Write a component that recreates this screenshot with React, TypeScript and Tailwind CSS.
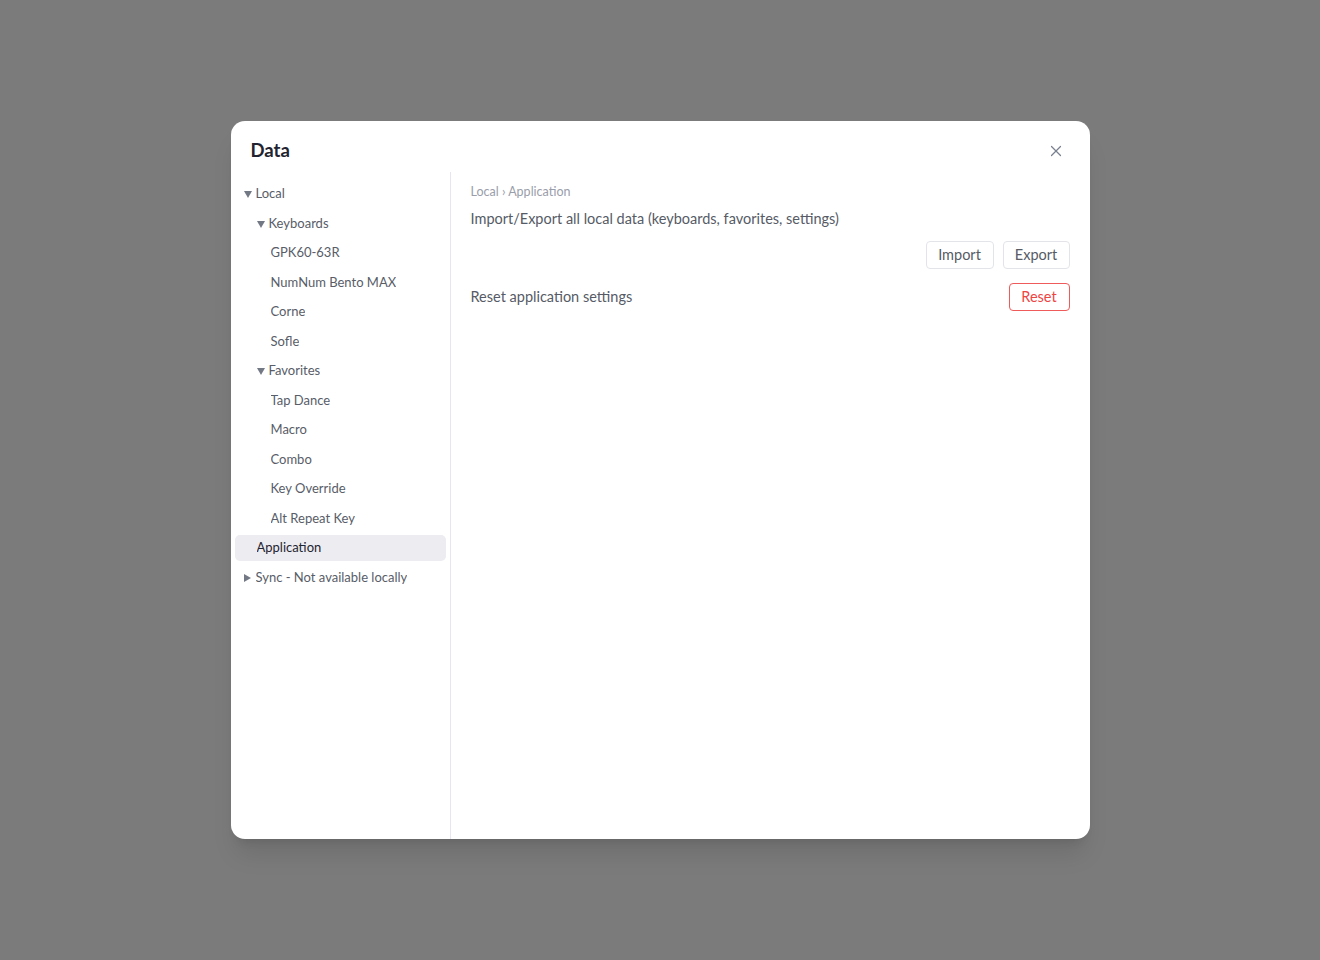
import { X } from "lucide-react";

type Node = {
  label: string;
  level: number;
  branch?: "open" | "closed";
  active?: boolean;
};

const tree: Node[] = [
  { label: "Local", level: 0, branch: "open" },
  { label: "Keyboards", level: 1, branch: "open" },
  { label: "GPK60-63R", level: 2 },
  { label: "NumNum Bento MAX", level: 2 },
  { label: "Corne", level: 2 },
  { label: "Sofle", level: 2 },
  { label: "Favorites", level: 1, branch: "open" },
  { label: "Tap Dance", level: 2 },
  { label: "Macro", level: 2 },
  { label: "Combo", level: 2 },
  { label: "Key Override", level: 2 },
  { label: "Alt Repeat Key", level: 2 },
  { label: "Application", level: 1, active: true },
  { label: "Sync - Not available locally", level: 0, branch: "closed" },
];

const indent = ["pl-[9px]", "pl-[22px]", "pl-[36px]"];

function Caret({ open }: { open: boolean }) {
  return (
    <span className="flex w-3 shrink-0 items-center">
      <svg width="8" height="8" viewBox="0 0 8 8" className="fill-[#737885]">
        {open ? <polygon points="0,1 8,1 4,8" /> : <polygon points="0,0 7,4 0,8" />}
      </svg>
    </span>
  );
}

function TreeRow({ node }: { node: Node }) {
  return (
    <div
      className={`flex h-[26px] items-center rounded-[5px] ${indent[node.level]} ${
        node.active ? "bg-[#ececf1] text-[#1f2430]" : "text-[#585d68]"
      }`}
    >
      {node.branch && <Caret open={node.branch === "open"} />}
      <span className="truncate">{node.label}</span>
    </div>
  );
}

export default function App() {
  return (
    <div
      className="flex min-h-[960px] w-full items-center justify-center bg-[#7b7b7c]"
      style={{ fontFamily: "Lato, 'Noto Sans', sans-serif" }}
    >
      <div className="flex h-[718px] w-[859px] flex-col rounded-[14px] bg-white shadow-xl">
        <div className="flex h-[51px] shrink-0 items-center justify-between px-5 pt-[9px]">
          <h1 className="text-[18.5px] font-bold text-[#1f2430]">Data</h1>
          <button type="button" className="mr-[5px] text-[#7a8090]">
            <X size={18} strokeWidth={1.6} />
          </button>
        </div>

        <div className="flex min-h-0 flex-1">
          <nav className="flex w-[220px] shrink-0 flex-col gap-[3.5px] border-r border-[#e6e7ec] pb-2 pl-1 pr-1 pt-[9px] text-[13px]">
            {tree.map((n) => (
              <TreeRow key={n.label} node={n} />
            ))}
          </nav>

          <section className="flex flex-1 flex-col pl-5 pr-5 pt-[12px]">
            <div className="text-[12.5px] leading-4 text-[#9a9eaa]">
              Local › Application
            </div>
            <p className="mt-[9px] text-[14.5px] leading-5 text-[#565b66]">
              Import/Export all local data (keyboards, favorites, settings)
            </p>
            <div className="mt-[12px] flex justify-end gap-[9px]">
              <button
                type="button"
                className="h-[28px] w-[68px] rounded-[4px] border border-[#e3e4ea] text-[14.5px] text-[#565b66]"
              >
                Import
              </button>
              <button
                type="button"
                className="h-[28px] w-[67px] rounded-[4px] border border-[#e3e4ea] text-[14.5px] text-[#565b66]"
              >
                Export
              </button>
            </div>
            <div className="mt-[14px] flex items-center justify-between">
              <span className="text-[14.5px] text-[#565b66]">Reset application settings</span>
              <button
                type="button"
                className="h-[28px] w-[61px] rounded-[4px] border border-[#ef5a5a] text-[14.5px] text-[#ef4444]"
              >
                Reset
              </button>
            </div>
          </section>
        </div>
      </div>
    </div>
  );
}
